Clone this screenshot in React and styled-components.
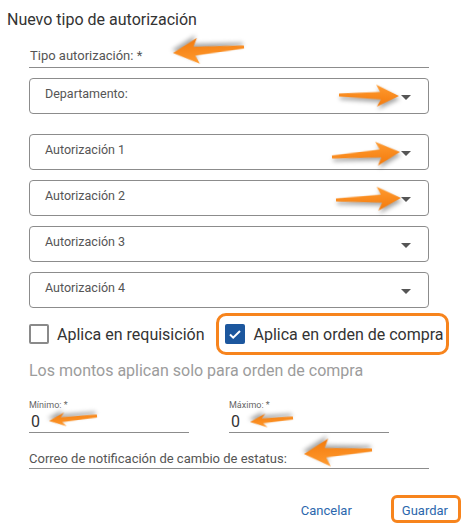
import React from 'react';
import styled, { createGlobalStyle } from 'styled-components';

const GlobalStyle = createGlobalStyle`
  html, body {
    margin: 0;
    padding: 0;
    background: #fff;
  }
  body {
    font-family: Roboto, "Liberation Sans", Arial, sans-serif;
    color: #333;
  }
`;

const arrows = [
  { from: [244, 47], to: [173, 53], head: 13, len: 24 },
  { from: [339, 95], to: [399, 96], head: 11, len: 21 },
  { from: [332, 157], to: [400, 152], head: 12, len: 22 },
  { from: [336, 200], to: [401, 198], head: 12, len: 22 },
  { from: [97, 416], to: [49, 421], head: 7, len: 15 },
  { from: [293, 418], to: [250, 422], head: 7, len: 15 },
  { from: [372, 450], to: [304, 454], head: 14, len: 24 },
];

function Arrow({ from, to, head, len }) {
  const dx = to[0] - from[0];
  const dy = to[1] - from[1];
  const length = Math.hypot(dx, dy);
  const angle = (Math.atan2(dy, dx) * 180) / Math.PI;
  const h = head + 4;
  const shaft = head * 0.34;
  const points = [
    [0, h - 1.6],
    [length - len + 2, h - shaft],
    [length - len - 2, h - head],
    [length, h],
    [length - len - 1, h + head],
    [length - len + 3, h + shaft],
    [0, h + 1.6],
  ]
    .map((p) => p.join(','))
    .join(' ');

  return (
    <ArrowSvg
      width={length + 2}
      height={h * 2}
      viewBox={`0 0 ${length + 2} ${h * 2}`}
      style={{
        left: from[0],
        top: from[1] - h,
        transform: `rotate(${angle}deg)`,
        transformOrigin: `0 ${h}px`,
      }}
    >
      <defs>
        <linearGradient id="arrowFill" x1="0" y1="0" x2="0" y2="1">
          <stop offset="0" stopColor="#ff9b30" />
          <stop offset="1" stopColor="#f37a0c" />
        </linearGradient>
      </defs>
      <polygon points={points} fill="url(#arrowFill)" />
    </ArrowSvg>
  );
}

function Caret() {
  return (
    <CaretIcon viewBox="0 0 10 5" width="10" height="5">
      <path d="M0 0h10L5 5z" />
    </CaretIcon>
  );
}

function Select({ label, spaced }) {
  return (
    <SelectBox $spaced={spaced}>
      <SelectText>{label}</SelectText>
      <Caret />
    </SelectBox>
  );
}

function Checkbox({ checked }) {
  return (
    <CheckBox $checked={checked}>
      {checked && (
        <svg viewBox="0 0 20 20" width="20" height="20">
          <path
            d="M5 10.5l3.2 3.2L15 7"
            fill="none"
            stroke="#fff"
            strokeWidth="2"
          />
        </svg>
      )}
    </CheckBox>
  );
}

export default function App() {
  return (
    <Page>
      <GlobalStyle />
      <Title>Nuevo tipo de autorización</Title>
      <Form>
        <LineField>
          <FieldText>Tipo autorización: *</FieldText>
        </LineField>
        <Selects>
          <Select label="Departamento:" spaced />
          <Select label="Autorización 1" />
          <Select label="Autorización 2" />
          <Select label="Autorización 3" />
          <Select label="Autorización 4" />
        </Selects>
        <CheckRow>
          <CheckLabel>
            <Checkbox />
            Aplica en requisición
          </CheckLabel>
          <CheckLabel $highlight>
            <Checkbox checked />
            Aplica en orden de compra
          </CheckLabel>
        </CheckRow>
        <Hint>Los montos aplican solo para orden de compra</Hint>
        <AmountRow>
          <AmountField>
            <SmallLabel>Mínimo: *</SmallLabel>
            <AmountValue>0</AmountValue>
          </AmountField>
          <AmountField>
            <SmallLabel>Máximo: *</SmallLabel>
            <AmountValue>0</AmountValue>
          </AmountField>
        </AmountRow>
        <MailField>
          <MailText>Correo de notificación de cambio de estatus:</MailText>
        </MailField>
      </Form>
      <Actions>
        <TextButton>Cancelar</TextButton>
        <TextButton $highlight>Guardar</TextButton>
      </Actions>
      <Annotations>
        {arrows.map((a, i) => (
          <Arrow key={i} {...a} />
        ))}
      </Annotations>
    </Page>
  );
}

const Page = styled.div`
  position: relative;
  width: 473px;
  height: 531px;
  overflow: hidden;
  box-sizing: border-box;
  padding-top: 10px;
`;

const Title = styled.h1`
  margin: 0 0 0 7px;
  font-size: 16px;
  line-height: 20px;
  font-weight: 400;
  color: #333;
`;

const Form = styled.div`
  margin-left: 29px;
  width: 400px;
  display: flex;
  flex-direction: column;
`;

const LineField = styled.div`
  margin-top: 15px;
  border-bottom: 1px solid #8c8c8c;
  padding-bottom: 3px;
  padding-left: 1px;
`;

const FieldText = styled.span`
  font-size: 13px;
  line-height: 17px;
  color: #555;
`;

const Selects = styled.div`
  margin-top: 10px;
  display: flex;
  flex-direction: column;
  gap: 10px;
`;

const SelectBox = styled.div`
  height: 36px;
  box-sizing: border-box;
  border: 1px solid #8c8c8c;
  border-radius: 4px;
  display: flex;
  align-items: center;
  justify-content: space-between;
  padding: 0 17px 0 15px;
  margin-bottom: ${(p) => (p.$spaced ? '10px' : '0')};
`;

const SelectText = styled.span`
  font-size: 12.5px;
  line-height: 16px;
  color: #555;
  margin-top: -4px;
`;

const CaretIcon = styled.svg`
  fill: #555;
  margin-top: 2px;
`;

const CheckRow = styled.div`
  margin-top: 5px;
  display: flex;
  align-items: center;
  gap: 12px;
  width: 420px;
`;

const CheckLabel = styled.label`
  display: flex;
  align-items: center;
  gap: 8px;
  height: 42px;
  box-sizing: border-box;
  font-size: 16px;
  color: #333;
  white-space: nowrap;
  border: ${(p) => (p.$highlight ? '3px solid #f7841d' : 'none')};
  border-radius: 10px;
  padding: ${(p) => (p.$highlight ? '0 2px 0 6px' : '0')};
`;

const CheckBox = styled.span`
  width: 20px;
  height: 20px;
  box-sizing: border-box;
  border-radius: 2px;
  border: ${(p) => (p.$checked ? 'none' : '2px solid #8a8a8a')};
  background: ${(p) => (p.$checked ? '#1c579e' : '#fff')};
  display: inline-flex;
  flex-shrink: 0;
`;

const Hint = styled.div`
  margin-top: 6px;
  font-size: 16px;
  line-height: 20px;
  color: #9c9c9c;
`;

const AmountRow = styled.div`
  margin-top: 19px;
  display: flex;
  gap: 40px;
`;

const AmountField = styled.div`
  width: 160px;
  border-bottom: 1px solid #8c8c8c;
  display: flex;
  flex-direction: column;
`;

const SmallLabel = styled.span`
  font-size: 9px;
  line-height: 11px;
  color: #666;
`;

const AmountValue = styled.span`
  font-size: 16px;
  line-height: 21px;
  color: #333;
  padding-left: 2px;
`;

const MailField = styled.div`
  margin-top: 16px;
  border-bottom: 1px solid #8c8c8c;
`;

const MailText = styled.span`
  display: block;
  font-size: 13px;
  line-height: 19px;
  color: #555;
`;

const Actions = styled.div`
  margin-top: 26px;
  padding-right: 12px;
  display: flex;
  justify-content: flex-end;
  align-items: center;
  gap: 36px;
`;

const TextButton = styled.button`
  font-family: inherit;
  font-size: 13px;
  color: #2b67ad;
  background: none;
  cursor: pointer;
  height: 28px;
  padding: ${(p) => (p.$highlight ? '3px 10px 0 8px' : '3px 0 0')};
  border: 3px solid ${(p) => (p.$highlight ? '#f7841d' : 'transparent')};
  border-radius: 6px;
  box-sizing: border-box;
  display: flex;
  align-items: center;
`;

const Annotations = styled.div`
  position: absolute;
  inset: 0;
  pointer-events: none;
`;

const ArrowSvg = styled.svg`
  position: absolute;
  overflow: visible;
  filter: drop-shadow(1px 3px 2px rgba(0, 0, 0, 0.35));
`;
